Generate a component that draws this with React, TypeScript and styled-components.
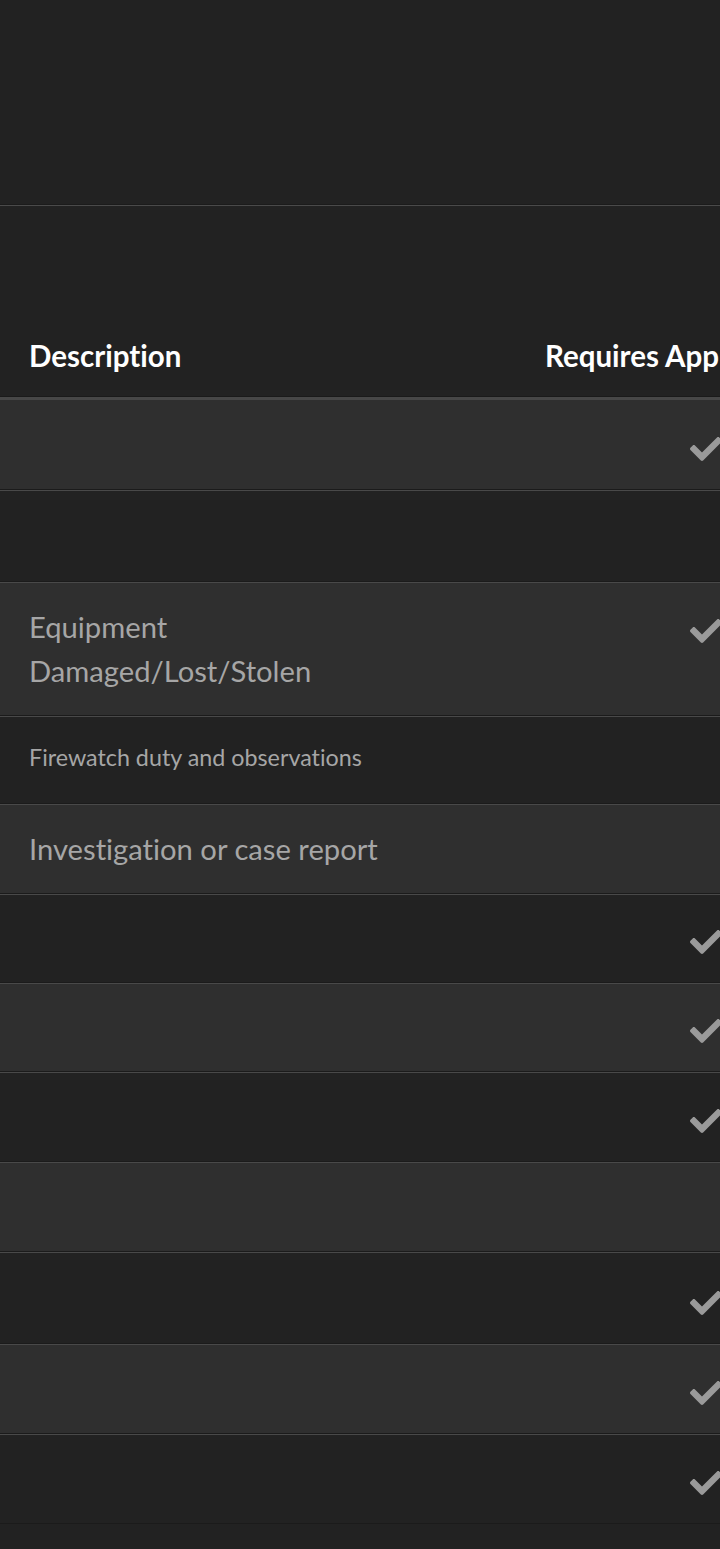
import React from "react";
import styled, { createGlobalStyle } from "styled-components";
import { FaCheck } from "react-icons/fa";

const GlobalStyle = createGlobalStyle`
  html, body {
    margin: 0;
    padding: 0;
    background: #222222;
    overflow: hidden;
  }
  body {
    font-family: Lato, "Open Sans", "Liberation Sans", sans-serif;
    font-variant-ligatures: none;
    font-feature-settings: "liga" 0;
  }
`;

const Page = styled.div`
  width: 720px;
  min-height: 1549px;
  background: #222222;
  overflow: hidden;
`;

const TopBar = styled.div`
  height: 205px;
  border-bottom: 1px solid #4a4a4a;
  box-shadow: 0 -1px 0 #1b1b1b inset;
`;

const Table = styled.div`
  width: 896px;
  display: flex;
  flex-direction: column;
`;

const HeaderRow = styled.div`
  display: grid;
  grid-template-columns: 516px 380px;
  padding: 128px 0 19px;
  border-bottom: 3px solid #474747;
  box-shadow: 0 -1px 0 #1a1a1a inset;
`;

const HeaderCell = styled.div`
  padding-left: 29px;
  font-size: 29.5px;
  line-height: 44px;
  font-weight: 700;
  color: #ffffff;
  white-space: nowrap;
`;

const Row = styled.div<{ $striped: boolean; $top?: number; $bottom?: number }>`
  display: grid;
  grid-template-columns: 516px 380px;
  align-items: start;
  padding: ${(p) => p.$top ?? 22}px 0 ${(p) => p.$bottom ?? 22}px;
  background: ${(p) => (p.$striped ? "#2f2f2f" : "#222222")};
  border-bottom: 1px solid #1b1b1b;
  border-top: 1px solid #494949;

  &:first-child {
    border-top: none;
    padding-top: 23px;
  }
`;

const DescCell = styled.div<{ $small?: boolean }>`
  padding-left: 29px;
  min-height: 44px;
  font-size: ${(p) => (p.$small ? 23.3 : 29.2)}px;
  line-height: 44px;
  color: #a6a6a6;
`;

const CheckCell = styled.div`
  height: 44px;
  padding-top: 8px;
  box-sizing: border-box;
  display: flex;
  justify-content: center;
  align-items: center;
  color: #9a9a9a;
`;

type Item = {
  text?: string[];
  small?: boolean;
  check: boolean;
  top?: number;
  bottom?: number;
};

const items: Item[] = [
  { check: true },
  { check: false, top: 24 },
  { text: ["Equipment", "Damaged/Lost/Stolen"], check: true },
  { text: ["Firewatch duty and observations"], small: true, check: false, top: 18, bottom: 24 },
  { text: ["Investigation or case report"], check: false },
  { check: true, top: 21 },
  { check: true, top: 21 },
  { check: true },
  { check: false },
  { check: true, top: 24 },
  { check: true },
  { check: true },
];

export default function App() {
  return (
    <Page>
      <GlobalStyle />
      <TopBar />
      <Table>
        <HeaderRow>
          <HeaderCell>Description</HeaderCell>
          <HeaderCell>Requires Approval</HeaderCell>
        </HeaderRow>
        <div>
          {items.map((it, i) => (
            <Row key={i} $striped={i % 2 === 0} $top={it.top} $bottom={it.bottom}>
              <DescCell $small={it.small}>
                {it.text?.map((t, j) => (
                  <div key={j}>{t}</div>
                ))}
              </DescCell>
              <CheckCell>{it.check ? <FaCheck size={32} /> : null}</CheckCell>
            </Row>
          ))}
        </div>
      </Table>
    </Page>
  );
}
